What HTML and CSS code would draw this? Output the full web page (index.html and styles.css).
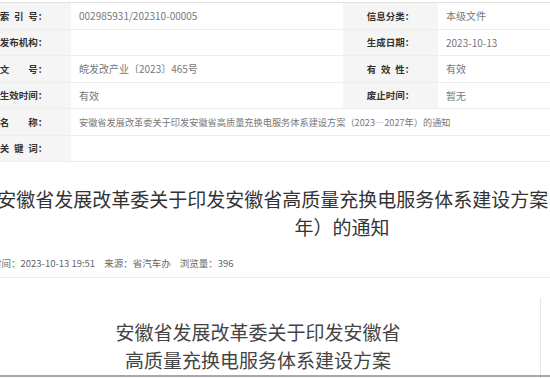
FILE: index.html
```html
<!DOCTYPE html>
<html lang="zh-CN">
<head>
    <meta charset="UTF-8">
    <meta name="viewport" content="width=device-width, initial-scale=1.0">
    <title>安徽省发展改革委关于印发安徽省高质量充换电服务体系建设方案（2023—2027年）的通知</title>
    <link rel="stylesheet" href="styles.css">
</head>
<body>
    <div class="page">
        <table class="info">
            <colgroup>
                <col class="col-label">
                <col class="col-value">
                <col class="col-label">
                <col class="col-value">
            </colgroup>
            <tr>
                <th><span class="lbl">索引号</span>：</th>
                <td>002985931/202310-00005</td>
                <th><span class="lbl">信息分类</span>：</th>
                <td>本级文件</td>
            </tr>
            <tr>
                <th><span class="lbl">发布机构</span>：</th>
                <td></td>
                <th><span class="lbl">生成日期</span>：</th>
                <td>2023-10-13</td>
            </tr>
            <tr>
                <th><span class="lbl">文号</span>：</th>
                <td>皖发改产业〔2023〕465号</td>
                <th><span class="lbl">有效性</span>：</th>
                <td>有效</td>
            </tr>
            <tr>
                <th><span class="lbl">生效时间</span>：</th>
                <td>有效</td>
                <th><span class="lbl">废止时间</span>：</th>
                <td>暂无</td>
            </tr>
            <tr>
                <th><span class="lbl">名称</span>：</th>
                <td colspan="3" class="name">安徽省发展改革委关于印发安徽省高质量充换电服务体系建设方案（2023—2027年）的通知</td>
            </tr>
            <tr>
                <th><span class="lbl">关键词</span>：</th>
                <td colspan="3"></td>
            </tr>
        </table>

        <div class="article">
            <h1 class="title">安徽省发展改革委关于印发安徽省高质量充换电服务体系建设方案（2023—2027<br>年）的通知</h1>
            <div class="meta"><span>发布时间：2023-10-13 19:51</span><span>来源：省汽车办</span><span>浏览量：396</span></div>
            <div class="content">
                <p class="doc-title">安徽省发展改革委关于印发安徽省<br>高质量充换电服务体系建设方案<br>（2023—2027年）</p>
            </div>
        </div>
    </div>
    <!-- window scrollbar edge -->
    <div class="scroll-edge"></div>
</body>
</html>
```

FILE: styles.css
```css
html, body {
    margin: 0;
    padding: 0;
    overflow: hidden;
    background-color: #ffffff;
}

body {
    font-family: "Noto Sans CJK SC", "Noto Sans", sans-serif;
    color: #333333;
}

/* page is scrolled a little to the right */
.page {
    width: 734px;
    margin-left: -24px;
}

/* Info table */
.info {
    width: 734px;
    margin-top: 2px;
    border-collapse: collapse;
    table-layout: fixed;
    border-top: 1px solid #e2e2e2;
}

.col-label {
    width: 95px;
}

.col-value {
    width: 272px;
}

.info th,
.info td {
    height: 25.5px;
    padding: 0;
    border-bottom: 1px solid #eeeeee;
    font-size: 9.5px;
    white-space: nowrap;
    overflow: hidden;
}

.info th {
    background-color: #f5f5f5;
    color: #333333;
    font-weight: bold;
    text-align: center;
}

.info td {
    padding-left: 8px;
    color: #777777;
    font-size: 10px;
}

.info td.name {
    font-size: 9.2px;
}

.lbl {
    display: inline-block;
    width: 38px;
    text-align: justify;
    text-align-last: justify;
    vertical-align: top;
}

/* Article */
.title {
    width: 732px;
    margin: 23px 0 0;
    font-size: 19px;
    font-weight: normal;
    line-height: 28px;
    text-align: center;
    text-indent: -16px;
    white-space: nowrap;
    color: #333333;
}

.meta {
    margin: 12px 0 0 -3px;
    padding-bottom: 4px;
    border-bottom: 1px solid #eeeeee;
    font-size: 9.5px;
    line-height: 20px;
    color: #666666;
}

.meta span {
    margin-right: 9px;
}

.content {
    box-sizing: border-box;
    width: 565px;
    margin-top: 20px;
    padding-top: 20px;
    border-right: 1px solid #e6e6e6;
}

.doc-title {
    margin: 0;
    font-size: 19px;
    line-height: 28px;
    text-align: center;
    color: #444444;
}

.scroll-edge {
    position: fixed;
    left: 0;
    right: 0;
    bottom: 1px;
    height: 2px;
    background-color: #a8a8a8;
}
```
